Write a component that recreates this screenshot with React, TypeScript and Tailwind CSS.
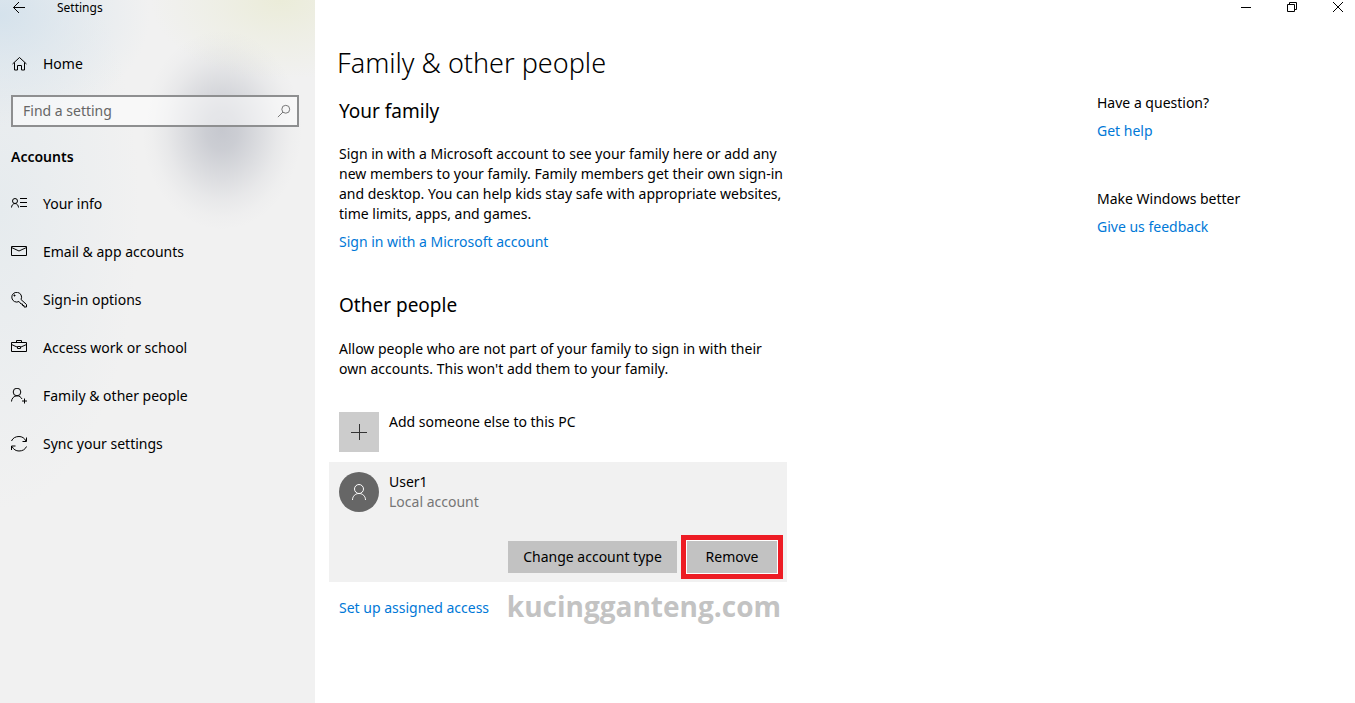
import React from 'react';

type IconProps = {
  children: React.ReactNode;
  className?: string;
};

function Icon({ children, className = 'w-4 h-4' }: IconProps) {
  return (
    <svg className={`shrink-0 ${className}`} viewBox="0 0 16 16" fill="none" stroke="currentColor" strokeWidth="1" aria-hidden="true">
      {children}
    </svg>
  );
}

const navItems = [
  {
    label: 'Your info',
    icon: (
      <>
        <circle cx="4" cy="5" r="2.5" />
        <path d="M.5 11.5C.5 9.500 2 7.500 4 7.500s3.500 2 3.500 4M9 2.500h7M9 6.500h7M9 10.500h7" />
      </>
    ),
  },
  {
    label: 'Email & app accounts',
    icon: <path d="M.5 2.500h15v9H.5zM.5 3.500 8 7l7.500-3.500" />,
  },
  {
    label: 'Sign-in options',
    icon: (
      <>
        <path d="M10 7.500 15.500 12.500v2.500H13v-1.500h-1.500V12H10L8 9.500A4.900 4.900 0 1 1 10 7.500z" />
        <circle cx="3.500" cy="3.500" r=".6" fill="currentColor" />
      </>
    ),
  },
  {
    label: 'Access work or school',
    icon: <path d="M.5 2.500h15v9H.5zM5.500 2.500v-2h5v2M.5 4.500l5.500 2.500M15.500 4.500 10 7M6.500 6.500h3v2h-3z" />,
  },
  {
    label: 'Family & other people',
    icon: (
      <>
        <circle cx="6" cy="4" r="3.800" />
        <path d="M.5 13.500C.5 10.500 3 7.800 6 7.800c2.200 0 4 1.200 5 3.200M13.500 10.500v5M11 13h5" />
      </>
    ),
  },
  {
    label: 'Sync your settings',
    icon: <path d="M.5 5C1.800 2 4.500.5 8 .5c3 0 5.500 1.500 7 4.500M15.500 1.500v4h-4M15.500 10.500c-1.300 3-4 4.500-7.500 4.500-3 0-5.500-1.500-7-4.500M.5 14v-4h4" />,
  },
];

function Sidebar() {
  return (
    <aside className="w-[315px] shrink-0 px-[11px] bg-[#f1f1f1] bg-[radial-gradient(ellipse_80px_100px_at_222px_130px,#70768a55_0%,#70768a4a_20%,#70768a2e_45%,#70768a12_70%,#70768a05_87%,#70768a00_100%),radial-gradient(ellipse_130px_80px_at_280px_0px,#ebecd9_0%,#ebecd980_45%,#ebecd900_100%),radial-gradient(ellipse_150px_110px_at_0px_15px,#d5e2ec_0%,#d5e2ec80_45%,#d5e2ec00_100%),radial-gradient(ellipse_140px_300px_at_0px_210px,#e6ebee_0%,#e6ebee80_50%,#e6ebee00_100%)]">
      <div className="flex items-center h-4 text-xs">
        <button type="button" aria-label="Back" className="w-[46px]">
          <Icon>
            <path d="M14 7.500H2.500M8 2 2.500 7.500 8 13" />
          </Icon>
        </button>
        <span>Settings</span>
      </div>
      <a href="#home" className="flex items-center gap-4 h-12 mt-6">
        <Icon>
          <path d="M1.500 8 8.500 1.500l7 6.500M3.500 6.500v7.500h3V9.500h4v4.500h3V6.500" />
        </Icon>
        Home
      </a>
      <div className="flex items-center h-8 mt-[7px] w-72 pl-[10px] pr-1.5 border-2 border-[#8e8f90] bg-white/50 text-[#666]">
        <input
          type="text"
          aria-label="Find a setting"
          placeholder="Find a setting"
          className="flex-1 min-w-0 bg-transparent outline-none placeholder:text-[#666]"
        />
        <Icon className="w-[14px] h-[14px]">
          <circle cx="10" cy="6" r="4.500" />
          <path d="M6.800 9.200 1 15" />
        </Icon>
      </div>
      <h2 className="flex items-center h-[46px] mt-[7px] font-semibold">Accounts</h2>
      <nav>
        {navItems.map((item) => (
          <a key={item.label} href="#accounts" className="flex items-center gap-4 h-12">
            <Icon>{item.icon}</Icon>
            {item.label}
          </a>
        ))}
      </nav>
    </aside>
  );
}

function WindowControls() {
  return (
    <div className="flex justify-end h-4">
      <button type="button" aria-label="Minimize" className="flex justify-center w-[46px]">
        <Icon>
          <path d="M3 7.500h10" />
        </Icon>
      </button>
      <button type="button" aria-label="Restore" className="flex justify-center w-[46px]">
        <Icon>
          <path d="M3.500 4.500h7v7h-7zM5.500 4.500v-2h7v7h-2" />
        </Icon>
      </button>
      <button type="button" aria-label="Close" className="flex justify-center w-10 pl-[6px]">
        <Icon>
          <path d="m3 2 10 10M13 2 3 12" />
        </Icon>
      </button>
    </div>
  );
}

export default function App() {
  return (
    <div className="flex min-h-screen bg-white text-black text-sm leading-5 font-['Noto_Sans','Open_Sans',sans-serif]">
      <Sidebar />
      <div className="flex-1 min-w-0">
        <WindowControls />
        <div className="flex justify-between mt-6">
          <main className="w-[472px] pl-[14px]">
            <h1 className="pl-2 text-[27px] leading-[46px] font-light">Family &amp; other people</h1>

            <section className="px-[10px] mt-[13px]">
              <h2 className="text-[19px] leading-6">Your family</h2>
              <p className="mt-[21px] whitespace-nowrap">
                Sign in with a Microsoft account to see your family here or add any
                <br />
                new members to your family. Family members get their own sign-in
                <br />
                and desktop. You can help kids stay safe with appropriate websites,
                <br />
                time limits, apps, and games.
              </p>
              <a href="#signin" className="block mt-2 text-[#0078d7]">Sign in with a Microsoft account</a>
            </section>

            <section className="mt-[41px]">
              <div className="px-[10px]">
                <h2 className="text-[19px] leading-6">Other people</h2>
                <p className="mt-[22px] whitespace-nowrap">
                  Allow people who are not part of your family to sign in with their
                  <br />
                  own accounts. This won't add them to your family.
                </p>
                <button type="button" className="flex gap-[10px] mt-[33px] text-left">
                  <span className="flex items-center justify-center w-10 h-10 bg-[#ccc] text-[#333]">
                    <Icon>
                      <path d="M8.500 0v16M0 8.500h16" />
                    </Icon>
                  </span>
                  Add someone else to this PC
                </button>
              </div>

              <div className="mt-[10px] p-[10px] pr-1 pb-[3px] bg-[#f1f1f1]">
                <div className="flex gap-[10px]">
                  <span className="flex items-center justify-center w-10 h-10 rounded-full bg-[#666] text-white">
                    <Icon>
                      <circle cx="8" cy="5" r="4.500" />
                      <path d="M1.500 16c0-3.800 2.800-6.500 6.500-6.500s6.500 2.700 6.500 6.500" />
                    </Icon>
                  </span>
                  <div>
                    <p>User1</p>
                    <p className="text-[#767676]">Local account</p>
                  </div>
                </div>
                <div className="flex items-center justify-end gap-1 mt-[23px]">
                  <button type="button" className="w-[169px] h-8 bg-[#c2c2c2]">Change account type</button>
                  <div className="p-px border-[5px] border-[#ed1c24] bg-white">
                    <button type="button" className="block w-[90px] h-8 bg-[#c2c2c2]">Remove</button>
                  </div>
                </div>
              </div>

              <div className="flex items-center justify-between h-12 pl-[10px] pr-[6px]">
                <a href="#access" className="mt-1 text-[#0078d7]">Set up assigned access</a>
                <span className="font-['Open_Sans',sans-serif] text-[28px] leading-8 font-bold text-[#c3c3c3]">kucingganteng.com</span>
              </div>
            </section>
          </main>

          <aside className="w-[258px] pt-[53px]">
            <h2>Have a question?</h2>
            <a href="#help" className="block mt-2 text-[#0078d7]">Get help</a>
            <h2 className="mt-12">Make Windows better</h2>
            <a href="#feedback" className="block mt-2 text-[#0078d7]">Give us feedback</a>
          </aside>
        </div>
      </div>
    </div>
  );
}
